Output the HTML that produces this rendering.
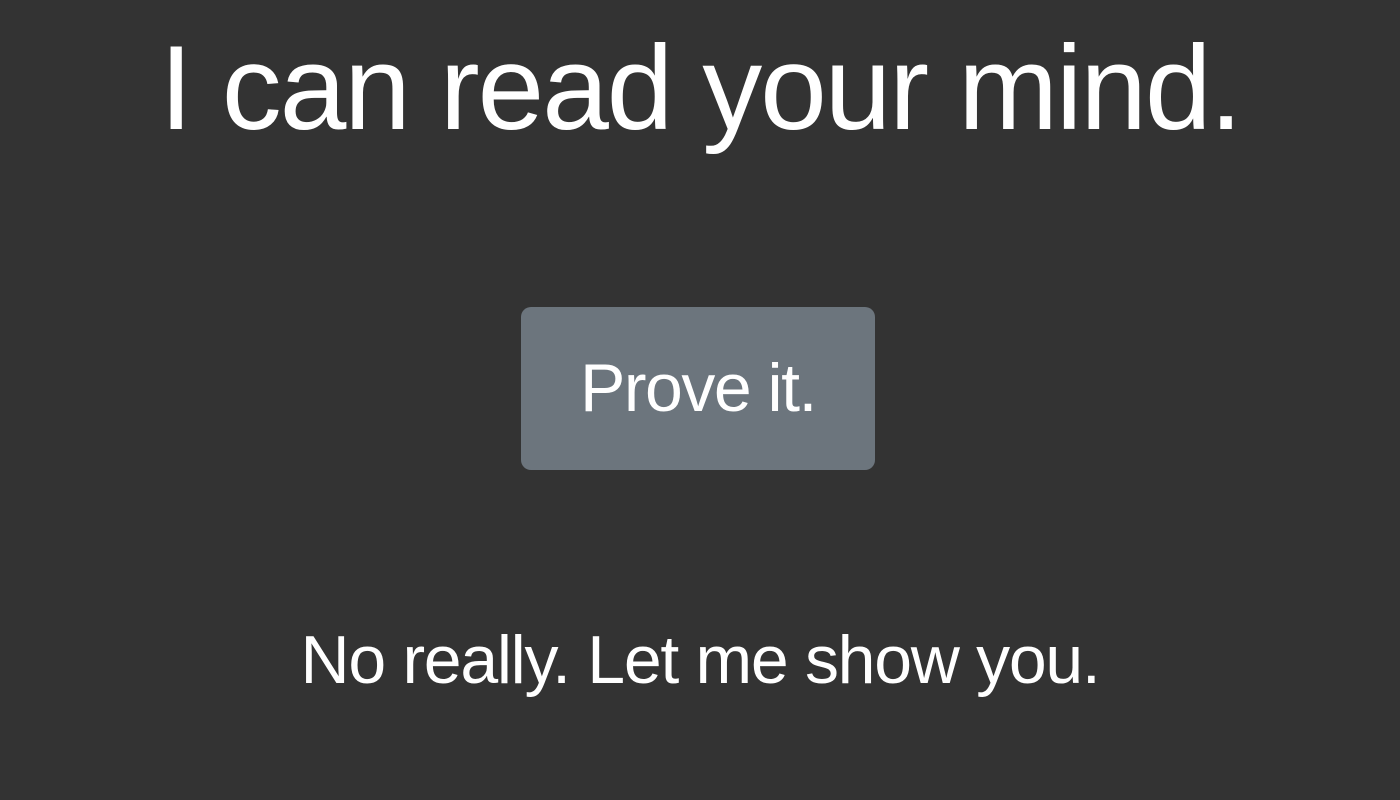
<!DOCTYPE html>
<html><head><meta charset="utf-8"><style>
html,body{margin:0;padding:0;width:1400px;height:800px;background:#333333;overflow:hidden;font-family:"Liberation Sans",sans-serif;color:#fff}
.t{position:absolute;left:0;width:1400px;text-align:center;white-space:nowrap}
#h{top:18px;font-size:120px;line-height:140px;letter-spacing:-2.2px}
#b{position:absolute;left:521px;top:307px;width:354px;height:163px;background:#6c757d;border-radius:10px;font-size:68px;line-height:163px;text-align:center;letter-spacing:-1.5px}
#p{top:620px;font-size:68px;line-height:80px;letter-spacing:-1.3px}
</style></head><body>
<div class="t" id="h">I can read your mind.</div>
<div id="b">Prove it.</div>
<div class="t" id="p">No really. Let me show you.</div>
</body></html>
